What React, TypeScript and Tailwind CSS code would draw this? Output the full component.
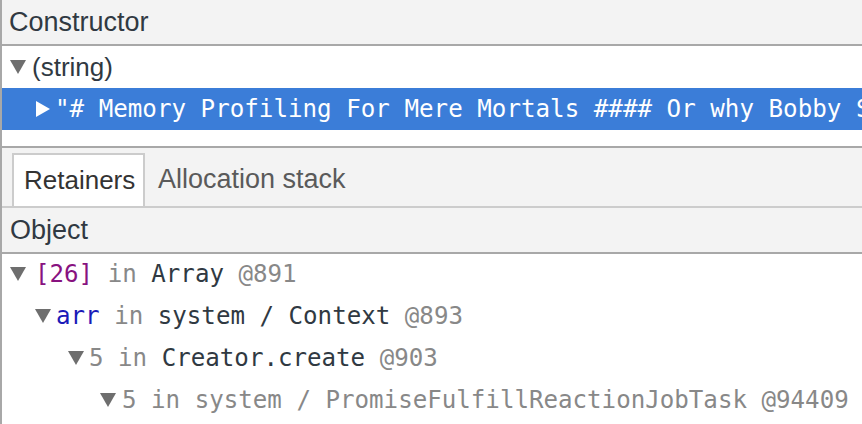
import React from "react";

const SANS = "font-['Liberation_Sans',Arial,sans-serif]";
const MONO = "font-['DejaVu_Sans_Mono',Menlo,monospace]";

function Down({ className = "" }: { className?: string }) {
  return (
    <svg width="16" height="14" viewBox="0 0 16 14" className={"shrink-0 " + className}>
      <polygon points="0,0 16,0 8,14" fill="#6e6e6e" />
    </svg>
  );
}

function Right() {
  return (
    <svg width="14" height="16" viewBox="0 0 14 16" className="shrink-0">
      <polygon points="0,0 14,8 0,16" fill="#ffffff" />
    </svg>
  );
}

export default function App() {
  return (
    <div className="w-[862px] h-[424px] overflow-hidden bg-white border-l-2 border-[#a8a8a8] flex flex-col">
      <div
        className={`h-[46px] shrink-0 bg-[#f3f3f3] border-b-2 border-[#a8a8a8] flex items-center pl-[7px] text-[27px] text-[#303942] ${SANS}`}
      >
        Constructor
      </div>
      <div className={`h-[42px] shrink-0 flex items-center pl-[8px] text-[26px] text-[#303942] ${SANS}`}>
        <Down />
        <span className="ml-[6px]">(string)</span>
      </div>
      <div
        className={`h-[42px] shrink-0 flex items-center pl-[34px] bg-[#3b7dd8] text-white text-[24.2px] whitespace-nowrap overflow-hidden ${MONO}`}
      >
        <Right />
        <span className="ml-[5px]">"# Memory Profiling For Mere Mortals #### Or why Bobby S</span>
      </div>
      <div className="h-[18px] shrink-0 bg-white border-b-2 border-[#a8a8a8]" />
      <div className={`h-[60px] shrink-0 bg-[#f3f3f3] border-b-2 border-[#cccccc] flex items-end pl-[10px] ${SANS}`}>
        <div className="h-[53px] w-[133px] bg-white border-2 border-b-0 border-[#cccccc] flex items-center pl-[10px] text-[26px] text-[#333333]">
          Retainers
        </div>
        <div className="h-[53px] flex items-center pl-[13px] text-[27px] text-[#5a5a5a]">Allocation stack</div>
      </div>
      <div
        className={`h-[46px] shrink-0 bg-[#f3f3f3] border-b-2 border-[#a8a8a8] flex items-center pl-[8px] text-[27px] text-[#303942] ${SANS}`}
      >
        Object
      </div>
      <div className={`flex flex-col text-[24.15px] whitespace-nowrap ${MONO}`}>
        <div className="h-[42px] flex items-center pl-[8px] pb-[2px]">
          <Down />
          <span className="ml-[9px] text-[#881280]">[26]</span>
          <span className="text-[#888888]">&nbsp;in&nbsp;</span>
          <span className="text-[#303942]">Array</span>
          <span className="text-[#888888]">&nbsp;@891</span>
        </div>
        <div className="h-[42px] flex items-center pl-[33px] pb-[2px]">
          <Down />
          <span className="ml-[5px] text-[#1a1ab8]">arr</span>
          <span className="text-[#888888]">&nbsp;in&nbsp;</span>
          <span className="text-[#303942]">system / Context</span>
          <span className="text-[#888888]">&nbsp;@893</span>
        </div>
        <div className="h-[42px] flex items-center pl-[66px] pb-[2px]">
          <Down />
          <span className="ml-[5px] text-[#888888]">5 in&nbsp;</span>
          <span className="text-[#303942]">Creator.create</span>
          <span className="text-[#888888]">&nbsp;@903</span>
        </div>
        <div className="h-[42px] flex items-center pl-[98px] pb-[2px]">
          <Down />
          <span className="ml-[6px] text-[#888888]">5 in system / PromiseFulfillReactionJobTask @94409</span>
        </div>
      </div>
    </div>
  );
}
